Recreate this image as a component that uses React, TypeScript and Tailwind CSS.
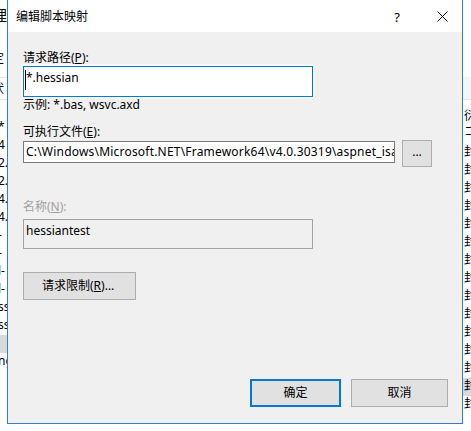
import React from 'react';

const leftRows = ['*', '4', '2.', '2.', '4.', '4.', '-', '-', 'l-', 'l-', 'ss', 'ss', '', 'ng'];
const rightRows = ['衍', 'コ', '封', '封', '封', '封', '封', '封', '封', '封', '封', '封', '封', '封', '封', '封', '封'];

function Field({
  children,
  className,
}: {
  children: React.ReactNode;
  className: string;
}) {
  return (
    <div className={`relative overflow-hidden whitespace-nowrap border px-[2px] ${className}`}>
      {children}
    </div>
  );
}

export default function App() {
  return (
    <div className="relative h-[431px] w-[471px] overflow-hidden bg-white text-[12px] leading-[16px] text-black font-['Noto_Sans','Noto_Sans_CJK_SC',sans-serif]">
      {/* window behind the dialog */}
      <div className="flex h-full">
        <div className="w-[7px] overflow-hidden">
          <div className="ml-[-8px] w-[40px]">
            <div className="h-[31px] pt-[6px] text-[15px] leading-[18px]">理</div>
            <div className="h-[46px] pt-[20px]">定</div>
            <div className="h-[23px] border-y border-[#e5e5e5] pt-[3px]">状</div>
            <div className="pt-[19px]">
              {leftRows.map((r, i) => (
                <div
                  key={i}
                  className={`h-[18px] pl-[6px] ${i === 12 ? 'bg-[#d9d9d9]' : ''}`}
                >
                  {r}
                </div>
              ))}
            </div>
          </div>
        </div>
        <div className="flex-1" />
        <div className="w-[8px] overflow-hidden">
          <div className="w-[30px]">
            <div className="h-[77px]" />
            <div className="h-[23px] border-b border-[#e5e5e5] bg-[#f5f5f5]" />
            <div className="pt-[8px]">
              {rightRows.map((r, i) => (
                <div
                  key={i}
                  className={`h-[18px] pl-[1px] ${i === 1 ? 'h-[14px] leading-[12px]' : ''} ${
                    i === 15 ? 'bg-[#d9d9d9]' : ''
                  }`}
                >
                  {r}
                </div>
              ))}
            </div>
          </div>
        </div>
      </div>

      {/* dialog */}
      <div className="absolute left-[7px] top-[-1px] flex h-[425px] w-[456px] flex-col border border-[#2f7fd3] bg-[#f0f0f0]">
        <div className="flex h-[32px] items-center bg-white pl-[8px] pt-[1px]">
          <span>编辑脚本映射</span>
          <span className="ml-auto mr-[37px] text-[13px]">?</span>
          <svg width="11" height="11" viewBox="0 0 11 11" className="mr-[14px]">
            <path d="M0.5 0.5 L10.5 10.5 M10.5 0.5 L0.5 10.5" stroke="#111" strokeWidth="1" />
          </svg>
        </div>

        <div className="flex flex-1 flex-col pl-[15px]">
          <div className="mt-[18px]">
            请求路径(<u>P</u>):
          </div>
          <Field className="h-[31px] w-[290px] border-[#0078d7] bg-white pt-[3px] shadow-[0_0_0_2px_#f7fbff]">
            <span className="absolute left-[1px] top-[3px] h-[20px] w-px bg-black" />
            *.hessian
          </Field>
          <div className="mt-0">示例: *.bas, wsvc.axd</div>

          <div className="mt-[11px]">
            可执行文件(<u>E</u>):
          </div>
          <div className="flex items-start gap-[7px]">
            <Field className="mt-[1px] h-[22px] w-[372px] border-[#7a7a7a] bg-white pt-[2px] tracking-[0.2px]">
              C:\Windows\Microsoft.NET\Framework64\v4.0.30319\aspnet_isapi.dll
            </Field>
            <button className="flex h-[27px] w-[30px] items-center justify-center border border-[#adadad] bg-[#e1e1e1] pb-[4px] text-[12px]">
              ...
            </button>
          </div>

          <div className="mt-[32px] text-[#a0a0a0]">
            名称(<u>N</u>):
          </div>
          <Field className="mt-[4px] h-[30px] w-[290px] border-[#a3a3a3] bg-[#f0f0f0] pt-[3px]">
            hessiantest
          </Field>

          <button className="mt-[23px] h-[28px] w-[113px] border border-[#adadad] bg-[#e1e1e1] text-left pl-[18px]">
            请求限制(<u>R</u>)...
          </button>

          <div className="mt-auto mb-[16px] flex gap-[10px] self-end pr-[14px]">
            <button className="h-[28px] w-[91px] border-2 border-[#0078d7] bg-[#e1e1e1]">
              确定
            </button>
            <button className="h-[28px] w-[97px] border border-[#adadad] bg-[#e1e1e1]">
              取消
            </button>
          </div>
        </div>
      </div>
    </div>
  );
}
